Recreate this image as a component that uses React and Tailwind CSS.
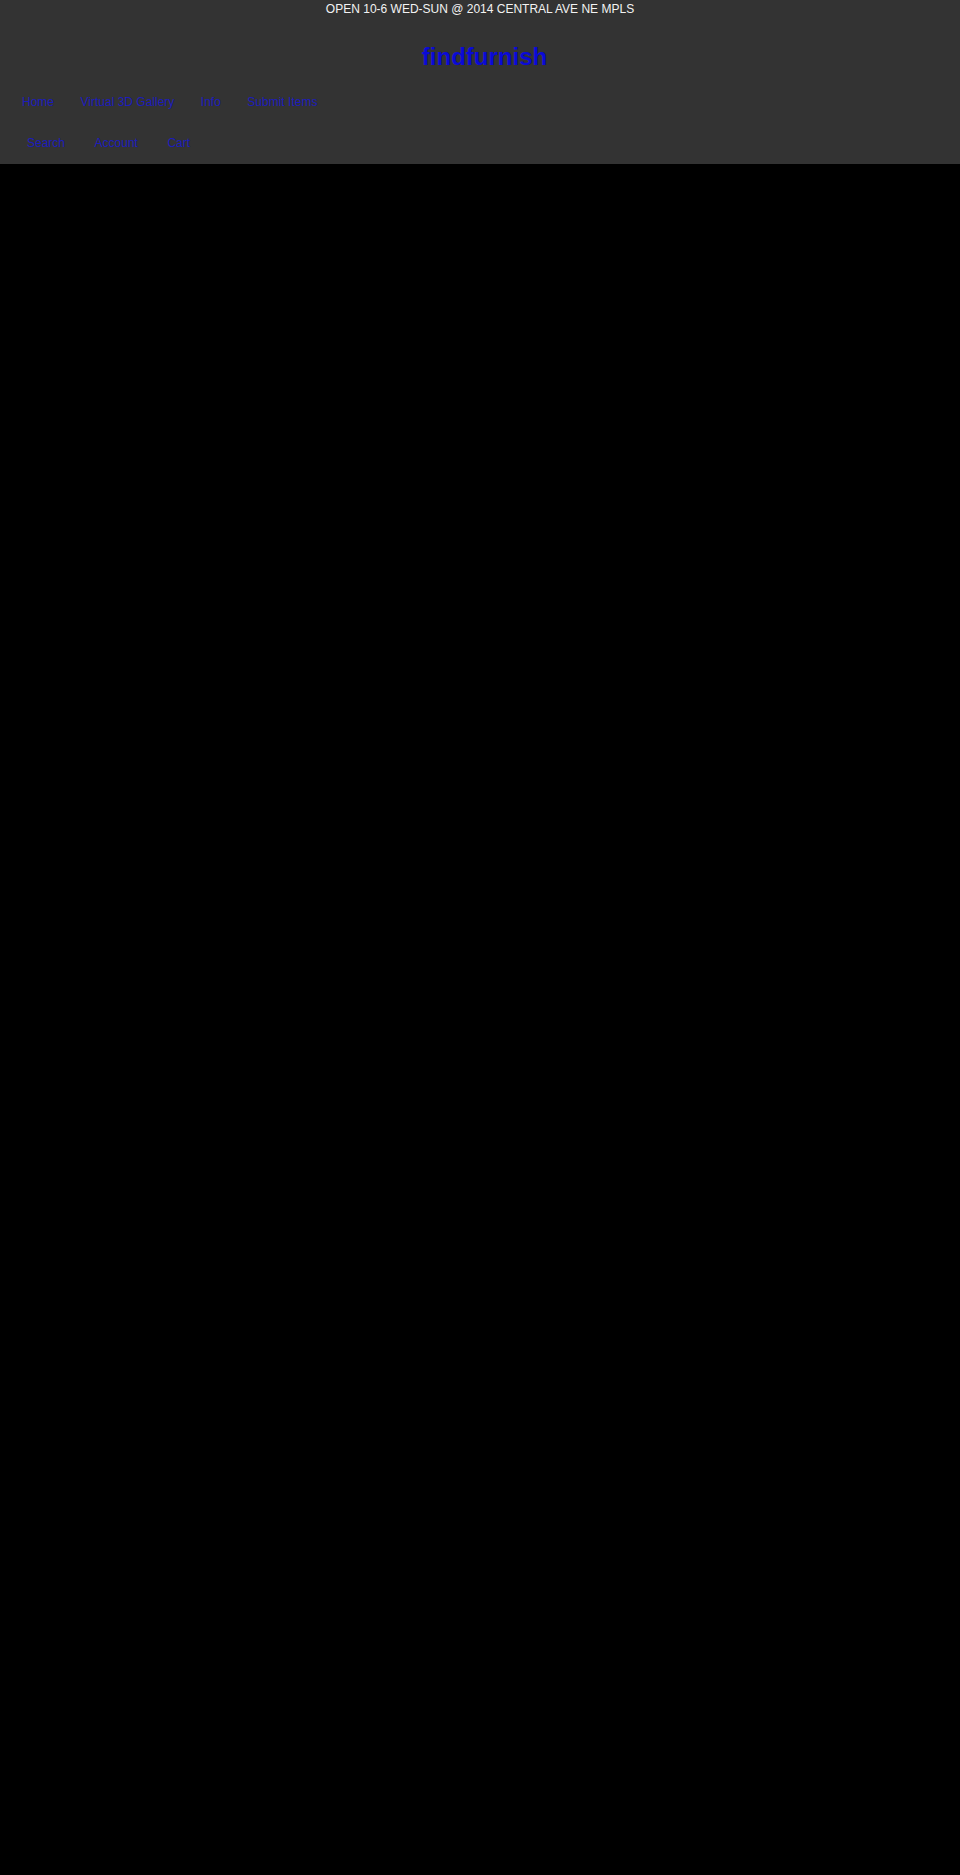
export default function App() {
  const font = { fontFamily: '"Liberation Sans", Arial, Helvetica, sans-serif' };
  return (
    <div className="min-h-[1875px] w-full bg-black" style={font}>
      <header className="bg-[#333333]">
        <div className="h-[18px] text-center text-[12px] leading-[18px] text-[#f2f2f2]">
          OPEN 10-6 WED-SUN @ 2014 CENTRAL AVE NE MPLS
        </div>
        <div className="mt-[23px] h-8 pl-[9px] text-center">
          <a href="#" className="text-[24px] font-bold leading-8 text-[#0a0ad6]">
            findfurnish
          </a>
        </div>
        <nav className="mt-2 flex h-[42px] items-center gap-[26.5px] pl-[22px] text-[12px] leading-[42px] text-[#1c1cbc]">
          <a href="#">Home</a>
          <a href="#">Virtual 3D Gallery</a>
          <a href="#">Info</a>
          <a href="#">Submit Items</a>
        </nav>
        <nav className="flex h-[41px] items-center gap-[29.5px] pl-[27px] text-[12px] leading-[41px] text-[#1c1cbc]">
          <a href="#">Search</a>
          <a href="#">Account</a>
          <a href="#">Cart</a>
        </nav>
      </header>
    </div>
  );
}
